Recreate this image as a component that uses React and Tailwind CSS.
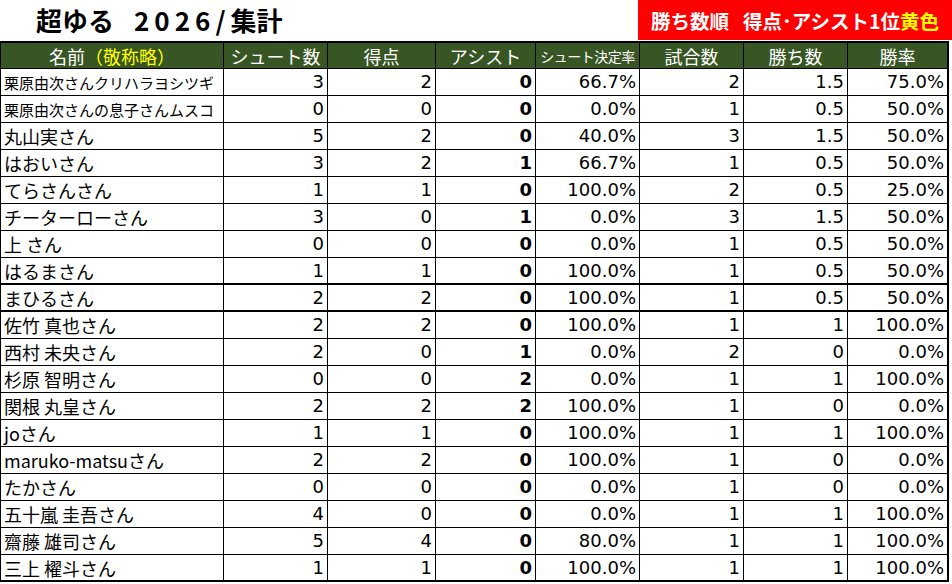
import React from "react";

const rows = [
  ["栗原由次さんクリハラヨシツギ", 3, 2, 0, "66.7%", 2, "1.5", "75.0%"],
  ["栗原由次さんの息子さんムスコ", 0, 0, 0, "0.0%", 1, "0.5", "50.0%"],
  ["丸山実さん", 5, 2, 0, "40.0%", 3, "1.5", "50.0%"],
  ["はおいさん", 3, 2, 1, "66.7%", 1, "0.5", "50.0%"],
  ["てらさんさん", 1, 1, 0, "100.0%", 2, "0.5", "25.0%"],
  ["チーターローさん", 3, 0, 1, "0.0%", 3, "1.5", "50.0%"],
  ["上 さん", 0, 0, 0, "0.0%", 1, "0.5", "50.0%"],
  ["はるまさん", 1, 1, 0, "100.0%", 1, "0.5", "50.0%"],
  ["まひるさん", 2, 2, 0, "100.0%", 1, "0.5", "50.0%"],
  ["佐竹 真也さん", 2, 2, 0, "100.0%", 1, "1", "100.0%"],
  ["西村 未央さん", 2, 0, 1, "0.0%", 2, "0", "0.0%"],
  ["杉原 智明さん", 0, 0, 2, "0.0%", 1, "1", "100.0%"],
  ["関根 丸皇さん", 2, 2, 2, "100.0%", 1, "0", "0.0%"],
  ["joさん", 1, 1, 0, "100.0%", 1, "1", "100.0%"],
  ["maruko-matsuさん", 2, 2, 0, "100.0%", 1, "0", "0.0%"],
  ["たかさん", 0, 0, 0, "0.0%", 1, "0", "0.0%"],
  ["五十嵐 圭吾さん", 4, 0, 0, "0.0%", 1, "1", "100.0%"],
  ["齋藤 雄司さん", 5, 4, 0, "80.0%", 1, "1", "100.0%"],
  ["三上 櫂斗さん", 1, 1, 0, "100.0%", 1, "1", "100.0%"],
];

const cols = "grid grid-cols-[223px_104px_108px_100px_104px_104px_104px_101px]";
const jp = "font-['Noto_Sans_CJK_JP',sans-serif]";
const num = "font-['DejaVu_Sans','Noto_Sans_CJK_JP',sans-serif]";

const App = () => {
  return (
    <div className="w-[952px] h-[584px] bg-white overflow-hidden text-black">
      {/* title */}
      <div className="flex h-[41px] items-stretch">
        <div className={`${jp} pl-[36px] pt-[2px] text-[26px] font-bold leading-[36px] whitespace-nowrap`}>
          超ゆる
          <span className="ml-[20px] tracking-[5px]">2026/</span>
          <span>集計</span>
        </div>
        <div className={`${jp} ml-auto w-[314px] h-[40px] bg-[#ff0000] text-white font-bold text-[19.5px] flex items-center pl-[13px] pt-[2px] whitespace-nowrap`}>
          勝ち数順<span className="ml-[14px]">得点･アシスト1位</span>
          <span className="text-[#ffff00]">黄色</span>
        </div>
      </div>

      {/* table */}
      <div className="border-l border-black w-[949px]">
        <div className={`${cols} h-[28px] bg-[#375623] border-t-2 border-black text-white ${jp} text-[18px] leading-none`}>
          <div className="border-r border-b border-black flex items-center justify-center">
            名前<span className="text-[#ffff00]">（敬称略）</span>
          </div>
          <div className="border-r border-b border-black flex items-center justify-center">シュート数</div>
          <div className="border-r border-b border-black flex items-center justify-center">得点</div>
          <div className="border-r border-b border-black flex items-center justify-center">アシスト</div>
          <div className="border-r border-b border-black flex items-center justify-center text-[14px] tracking-[-0.5px]">シュート決定率</div>
          <div className="border-r border-b border-black flex items-center justify-center">試合数</div>
          <div className="border-r border-b border-black flex items-center justify-center">勝ち数</div>
          <div className="border-r-2 border-b border-black flex items-center justify-center">勝率</div>
        </div>

        {rows.map((r, i) => {
          const thick = i === 7 || i === 8 || i === rows.length - 1;
          const b = thick ? "border-b-2" : "border-b";
          const nameSize = i < 2 ? "text-[15px]" : "text-[18px]";
          return (
            <div key={i} className={`${cols} h-[27px] leading-none`}>
              <div className={`${b} border-r border-black flex items-center pl-[3px] whitespace-nowrap overflow-hidden ${jp} ${nameSize}`}>
                {r[0]}
              </div>
              {r.slice(1).map((v, j) => (
                <div
                  key={j}
                  className={`${b} ${j === 6 ? "border-r-2" : "border-r"} border-black flex items-center justify-end pr-[3px] ${num} text-[18px] ${j === 2 ? "font-bold" : "font-normal"}`}
                >
                  {v}
                </div>
              ))}
            </div>
          );
        })}
      </div>
    </div>
  );
};

export default App;
